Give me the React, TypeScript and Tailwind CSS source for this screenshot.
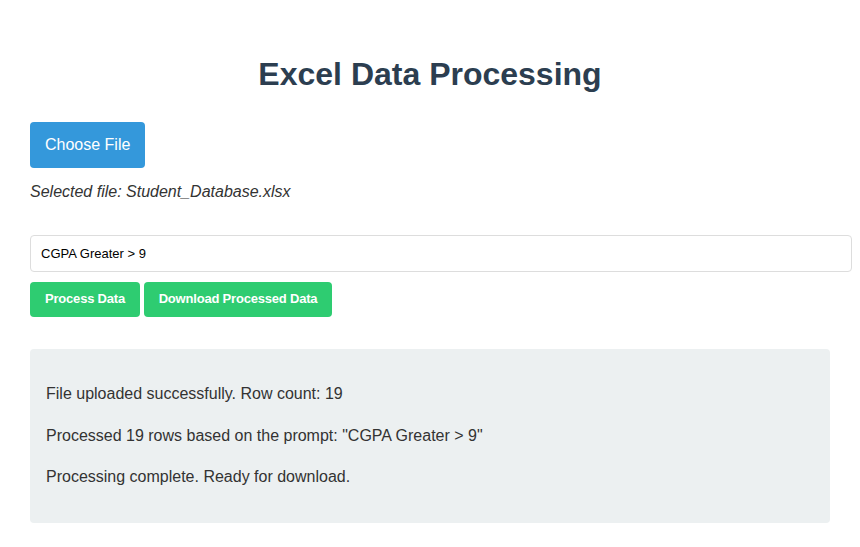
export default function App() {
  return (
    <div className="min-h-[547px] bg-white font-['Liberation_Sans',Arial,sans-serif] text-[#333] leading-[1.6]">
      <div className="w-[800px] ml-[30px] pt-[55px]">
        <h1 className="text-center text-[32px] font-bold leading-[38px] text-[#2c3e50]">
          Excel Data Processing
        </h1>

        <button className="mt-[29px] h-[46px] rounded-[4px] bg-[#3498db] px-[15px] text-[16px] text-white">
          Choose File
        </button>
        <p className="mt-[11px] text-[16px] italic leading-[26px] text-[#333]">
          Selected file: Student_Database.xlsx
        </p>

        <input
          readOnly
          value="CGPA Greater > 9"
          className="mt-[30px] block h-[37px] w-[822px] rounded-[4px] border border-[#ddd] px-[10px] text-[13px] text-black outline-none"
        />

        <div className="mt-[10px] flex gap-[4px]">
          <button className="h-[35px] w-[110px] rounded-[4px] bg-[#2ecc71] text-[13px] font-bold tracking-[-0.2px] text-white">
            Process Data
          </button>
          <button className="h-[35px] w-[188px] rounded-[4px] bg-[#2ecc71] text-[13px] font-bold tracking-[-0.2px] text-white">
            Download Processed Data
          </button>
        </div>

        <div className="mt-[32px] rounded-[4px] bg-[#ecf0f1] px-[16px] pt-[16px] pb-[17px] text-[16px] text-[#333]">
          <p className="my-[16px]">File uploaded successfully. Row count: 19</p>
          <p className="my-[16px]">Processed 19 rows based on the prompt: "CGPA Greater &gt; 9"</p>
          <p className="my-[16px]">Processing complete. Ready for download.</p>
        </div>
      </div>
    </div>
  );
}
